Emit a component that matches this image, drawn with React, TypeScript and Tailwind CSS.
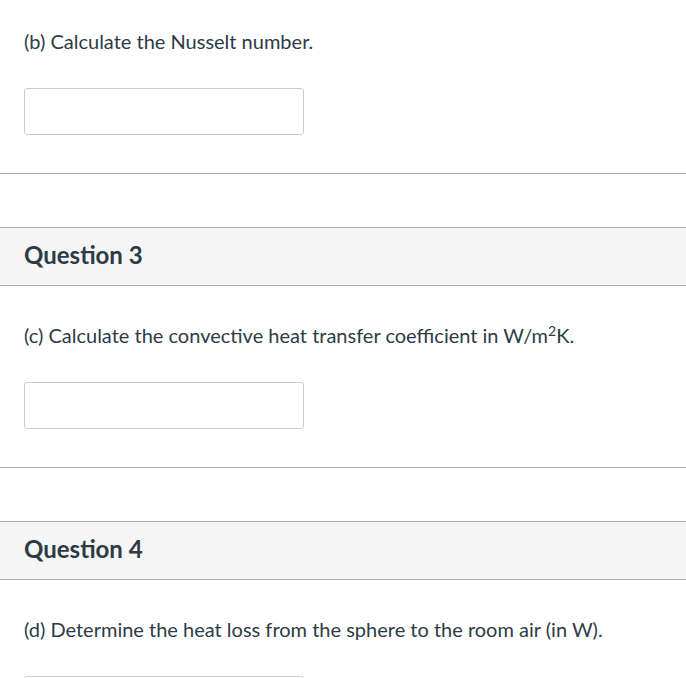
import React from "react";

type Item = { title?: string; prompt: React.ReactNode };

const items: Item[] = [
  { prompt: "(b) Calculate the Nusselt number." },
  {
    title: "Question 3",
    prompt: (
      <>
        (c) Calculate the convective heat transfer coefficient in W/m
        <sup className="text-[14px]">2</sup>K.
      </>
    ),
  },
  {
    title: "Question 4",
    prompt: "(d) Determine the heat loss from the sphere to the room air (in W).",
  },
];

const QuestionBlock: React.FC<{ item: Item; first: boolean }> = ({ item, first }) => (
  <div className={first ? "" : "mt-[53px]"}>
    {item.title && (
      <div className="h-[59px] flex items-center px-6 pb-[3px] bg-[#f5f5f5] border-y border-[#adadad]">
        <h2 className="text-[24px] font-bold text-[#2d3b45] leading-none">{item.title}</h2>
      </div>
    )}
    <div className={`px-6 pb-[38px] border-b border-[#adadad] ${first ? "pt-[27px]" : "pt-[35px]"}`}>
      <p className="text-[20px] leading-[28px] text-[#2d3b45]">{item.prompt}</p>
      <input
        type="text"
        className="mt-[33px] block w-[280px] h-[47px] border border-[#c7cdd1] rounded-[3px] bg-white outline-none"
      />
    </div>
  </div>
);

export default function App() {
  return (
    <div className="w-[686px] h-[678px] overflow-hidden bg-white" style={{ fontFamily: "Lato, 'Liberation Sans', sans-serif" }}>
      {items.map((it, i) => (
        <QuestionBlock key={i} item={it} first={i === 0} />
      ))}
    </div>
  );
}
